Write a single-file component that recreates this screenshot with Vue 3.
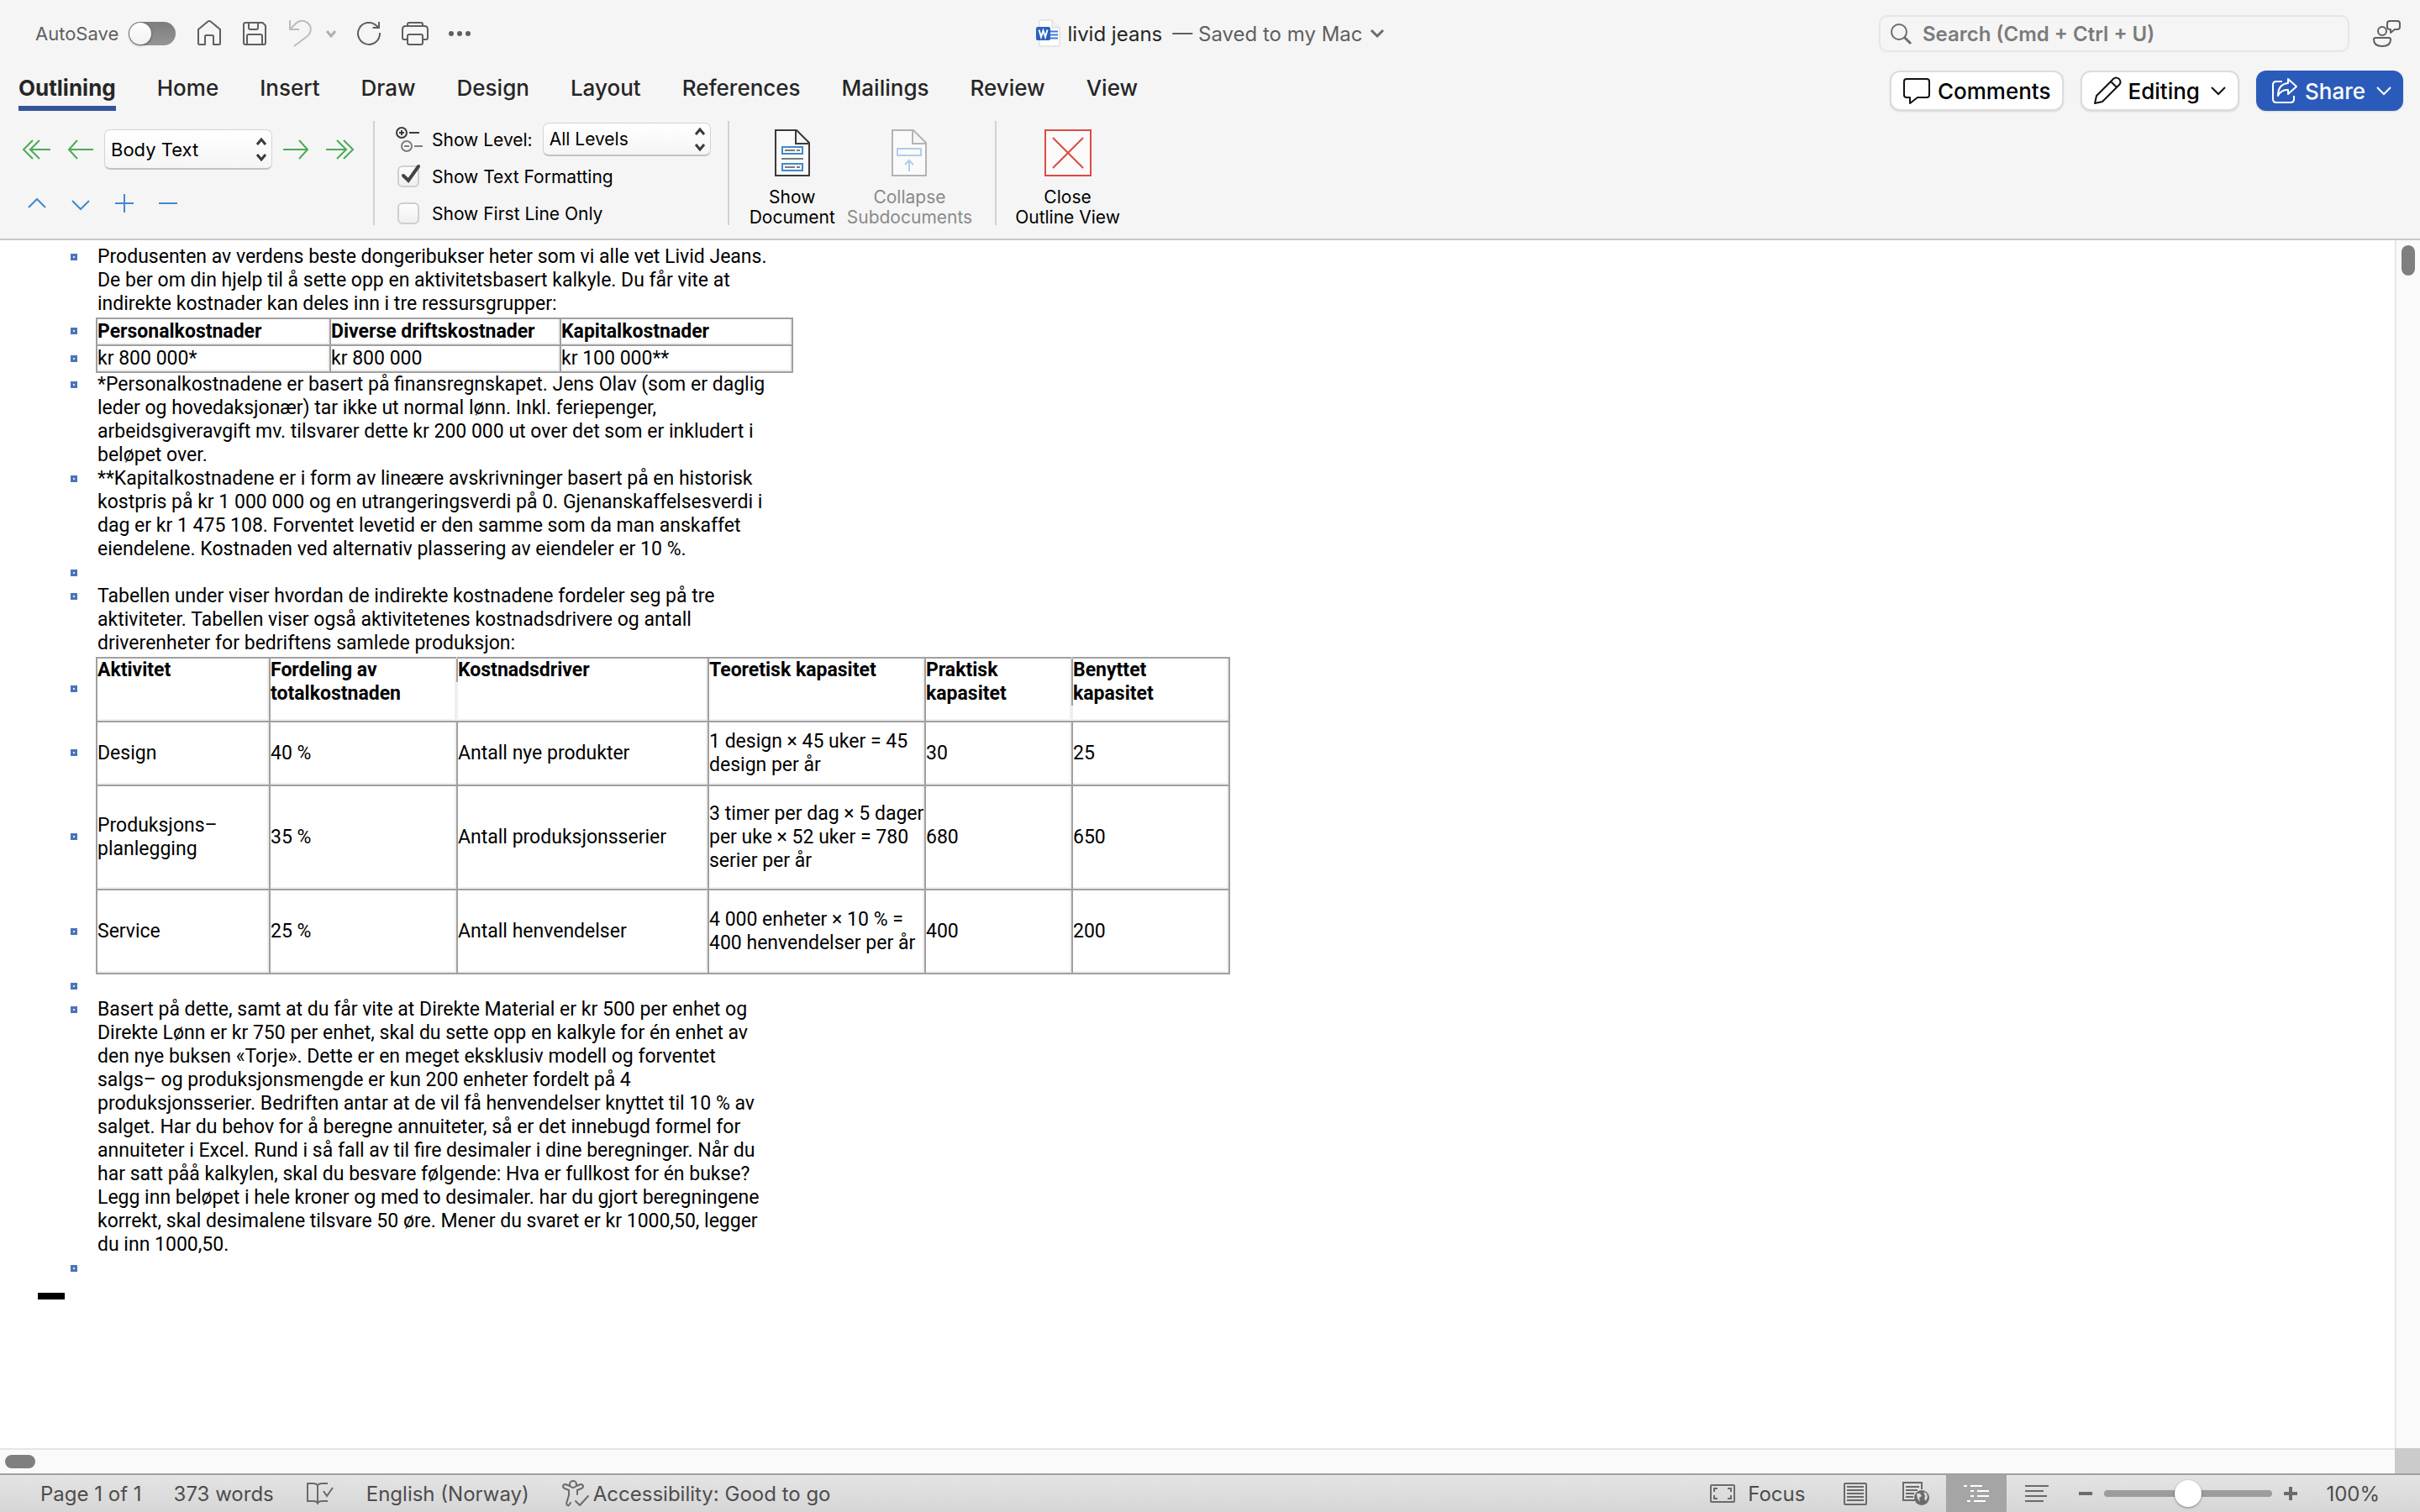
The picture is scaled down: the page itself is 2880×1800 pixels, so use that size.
<template>
    <div class="word">
        <header class="titlebar">
            <div class="quick-access">
                <label class="autosave">
                    AutoSave
                    <input type="checkbox" v-model="autoSave" class="switch" />
                </label>
                <button class="qa-btn" aria-label="Home">
                    <svg width="32" height="32" viewBox="0 0 32 32" fill="none" stroke="#5f5f5f" stroke-width="2" stroke-linejoin="round">
                        <path d="M3 11 L14.500 1.500 Q16 0.500 17.500 1.500 L29 11 V27.500 Q29 29 27.500 29 H21 V19.500 Q21 18 19.500 18 H12.500 Q11 18 11 19.500 V29 H4.500 Q3 29 3 27.500 Z" />
                    </svg>
                </button>
                <button class="qa-btn" aria-label="Save">
                    <svg width="32" height="32" viewBox="0 0 32 32" fill="none" stroke="#5f5f5f" stroke-width="2" stroke-linejoin="round">
                        <path d="M5 3 H25.500 L29 6.500 V27 Q29 29 27 29 H5 Q3 29 3 27 V5 Q3 3 5 3 Z" />
                        <path d="M9 3 V9 Q9 11 11 11 H18 Q20 11 20 9 V3" />
                        <path d="M7 29 V19 Q7 17 9 17 H23 Q25 17 25 19 V29" />
                    </svg>
                </button>
                <button class="qa-btn undo" aria-label="Undo" disabled>
                    <svg width="32" height="32" viewBox="0 0 32 32" fill="none" stroke="#bdbdbd" stroke-width="2">
                        <path d="M4 0 V11 H15" />
                        <path d="M4 11 L11.500 3.500 C16 -0.500 22 0 26 4 C30 8 29.500 14 26 18 L9 31" />
                    </svg>
                    <svg width="14" height="10" viewBox="0 0 14 10" fill="none" stroke="#b0b0b0" stroke-width="3">
                        <path d="M2 2 L7 8 L12 2" />
                    </svg>
                </button>
                <button class="qa-btn" aria-label="Redo">
                    <svg width="32" height="32" viewBox="0 0 32 32" fill="none" stroke="#5f5f5f" stroke-width="2">
                        <path d="M29 15 A13 13 0 1 1 25 6.500 L28 9" />
                        <path d="M28 2 V9 H20.500" />
                    </svg>
                </button>
                <button class="qa-btn" aria-label="Print">
                    <svg width="34" height="32" viewBox="0 0 34 32" fill="none" stroke="#5f5f5f" stroke-width="2" stroke-linejoin="round">
                        <path d="M8 7 V5 Q8 3 10 3 H24 Q26 3 26 5 V7" />
                        <path d="M8 23 H4 Q2 23 2 21 V11 Q2 7 6 7 H28 Q32 7 32 11 V21 Q32 23 30 23 H26" />
                        <rect x="8" y="17" width="18" height="12" rx="2" />
                    </svg>
                </button>
                <button class="qa-btn" aria-label="More">
                    <svg width="28" height="8" viewBox="0 0 28 8" fill="#5f5f5f">
                        <circle cx="4" cy="4" r="3" />
                        <circle cx="14" cy="4" r="3" />
                        <circle cx="24" cy="4" r="3" />
                    </svg>
                </button>
            </div>

            <button class="doc-title">
                <svg width="30" height="34" viewBox="0 0 30 34">
                    <path d="M4 1 H19 L28 10 V32 H4 Z" fill="#fff" stroke="#d4d4d4" />
                    <path d="M19 1 V10 H28" fill="#f2f2f2" stroke="#d4d4d4" />
                    <path d="M17 14.500 H26 M17 18.500 H26 M17 22.500 H26" stroke="#3f7ad6" stroke-width="2" />
                    <rect x="0" y="9" width="17" height="16" rx="2" fill="#2b5fc1" />
                    <path d="M3.500 12.500 L6 21 L8.500 13.500 L11 21 L13.500 12.500" fill="none" stroke="#fff" stroke-width="2" />
                </svg>
                <span class="doc-name">livid jeans</span>
                <span class="doc-state">— Saved to my Mac</span>
                <svg width="18" height="12" viewBox="0 0 18 12" fill="none" stroke="#6c6c6c" stroke-width="3">
                    <path d="M2 2 L9 9 L16 2" />
                </svg>
            </button>

            <div class="title-right">
                <label class="search">
                    <svg width="28" height="28" viewBox="0 0 28 28" fill="none" stroke="#6c6c6c" stroke-width="2">
                        <circle cx="12" cy="12" r="9" />
                        <path d="M18.500 18.500 L26 26" stroke-width="3" />
                    </svg>
                    <input type="search" placeholder="Search (Cmd + Ctrl + U)" aria-label="Search" />
                </label>
                <button class="qa-btn" aria-label="Presence">
                    <svg width="34" height="34" viewBox="0 0 34 34" fill="none" stroke="#5f5f5f" stroke-width="2" stroke-linejoin="round">
                        <circle cx="11" cy="14" r="5" />
                        <path d="M3 22 H19 Q21 22 21 24 Q21 32 11 32 Q1 32 1 24 Q1 22 3 22 Z" />
                        <path d="M20 2 H29 Q32 2 32 5 V9 Q32 12 29 12 H26 L21 16 V12 Q17 12 17 9 V5 Q17 2 20 2 Z" />
                    </svg>
                </button>
            </div>
        </header>

        <nav class="tabbar">
            <div class="tabs">
                <button v-for="tab in tabs" :key="tab" class="tab" :class="{ active: tab === activeTab }"
                    @click="activeTab = tab">{{ tab }}</button>
            </div>
            <div class="actions">
                <button class="action">
                    <svg width="34" height="34" viewBox="0 0 34 34" fill="none" stroke="#111" stroke-width="2" stroke-linejoin="round">
                        <path d="M5 3 H29 Q32 3 32 6 V22 Q32 25 29 25 H18 L9 32 V25 H5 Q2 25 2 22 V6 Q2 3 5 3 Z" />
                    </svg>
                    Comments
                </button>
                <button class="action">
                    <svg width="34" height="34" viewBox="0 0 34 34" fill="none" stroke="#111" stroke-width="2" stroke-linejoin="round">
                        <path d="M2 32 L4 23 L24 3 Q27 0 31 3 Q34 7 31 10 L11 30 Z M21 6 L28 13" />
                    </svg>
                    Editing
                    <svg class="caret" width="20" height="12" viewBox="0 0 20 12" fill="none" stroke="#111" stroke-width="2">
                        <path d="M2 2 L10 10 L18 2" />
                    </svg>
                </button>
                <button class="action primary">
                    <svg width="32" height="32" viewBox="0 0 32 32" fill="none" stroke="#fff" stroke-width="2" stroke-linejoin="round">
                        <path d="M13 5 H6 Q2 5 2 9 V26 Q2 30 6 30 H23 Q27 30 27 26 V22" />
                        <path d="M20 2 L30 11 L20 20 V15 Q12 14 8 22 Q8 8 20 7 Z" />
                    </svg>
                    Share
                    <svg class="caret" width="20" height="12" viewBox="0 0 20 12" fill="none" stroke="#fff" stroke-width="2">
                        <path d="M2 2 L10 10 L18 2" />
                    </svg>
                </button>
            </div>
        </nav>

        <section class="ribbon">
            <div class="group outline-group">
                <div class="tool-row level-row">
                    <button class="tool green" aria-label="Promote to Heading 1">
                        <svg width="36" height="26" viewBox="0 0 36 26"><path d="M34 13 H9 M21 2 L10 13 L21 24 M13 2 L2 13 L13 24" /></svg>
                    </button>
                    <button class="tool green" aria-label="Promote">
                        <svg width="36" height="26" viewBox="0 0 36 26"><path d="M33 13 H4 M14 2 L4 13 L14 24" /></svg>
                    </button>
                    <span class="picker tall">
                        <select aria-label="Outline level">
                            <option>Body Text</option>
                            <option>Level 1</option>
                        </select>
                        <svg width="14" height="28" viewBox="0 0 14 28"><path d="M2 8 L7 2 L12 8 M2 20 L7 26 L12 20" /></svg>
                    </span>
                    <button class="tool green" aria-label="Demote">
                        <svg width="36" height="26" viewBox="0 0 36 26"><path d="M3 13 H32 M22 2 L32 13 L22 24" /></svg>
                    </button>
                    <button class="tool green" aria-label="Demote to Body Text">
                        <svg width="36" height="26" viewBox="0 0 36 26"><path d="M2 13 H27 M15 2 L26 13 L15 24 M23 2 L34 13 L23 24" /></svg>
                    </button>
                </div>
                <div class="tool-row">
                    <button class="tool blue" aria-label="Move Up">
                        <svg width="24" height="24" viewBox="0 0 24 24"><path d="M2 17 L12 7 L22 17" /></svg>
                    </button>
                    <button class="tool blue" aria-label="Move Down">
                        <svg width="24" height="24" viewBox="0 0 24 24"><path d="M2 9 L12 19 L22 9" /></svg>
                    </button>
                    <button class="tool blue" aria-label="Expand">
                        <svg width="24" height="24" viewBox="0 0 24 24"><path d="M1 12 H23 M12 1 V23" /></svg>
                    </button>
                    <button class="tool blue" aria-label="Collapse">
                        <svg width="24" height="24" viewBox="0 0 24 24"><path d="M1 12 H23" /></svg>
                    </button>
                </div>
            </div>

            <div class="group show-group">
                <div class="option-row">
                    <svg width="34" height="34" viewBox="0 0 34 34" fill="none" stroke-width="2">
                        <g stroke="#3a3a3a">
                            <circle cx="8" cy="9" r="6" />
                            <path d="M5 9 H11 M8 6 V12 M17 9 H29" />
                        </g>
                        <g stroke="#7c7c7c">
                            <circle cx="14" cy="25" r="6" />
                            <path d="M11 25 H17 M23 25 H33" />
                        </g>
                    </svg>
                    <label for="show-level">Show Level:</label>
                    <span class="picker">
                        <select id="show-level">
                            <option>All Levels</option>
                            <option>Level 1</option>
                        </select>
                        <svg width="14" height="28" viewBox="0 0 14 28"><path d="M2 8 L7 2 L12 8 M2 20 L7 26 L12 20" /></svg>
                    </span>
                </div>
                <label class="option-row">
                    <span class="check">
                        <input type="checkbox" v-model="showFormatting" />
                        <svg v-if="showFormatting" width="28" height="28" viewBox="0 0 28 28" fill="none" stroke="#444" stroke-width="4" stroke-linecap="round">
                            <path d="M7 14 L13 20 L25 3" />
                        </svg>
                    </span>
                    Show Text Formatting
                </label>
                <label class="option-row">
                    <span class="check">
                        <input type="checkbox" v-model="firstLineOnly" />
                    </span>
                    Show First Line Only
                </label>
            </div>

            <div class="group master-group">
                <button class="big-btn">
                    <svg width="42" height="56" viewBox="0 0 42 56" fill="#fafafa" stroke="#3a3a3a" stroke-width="2">
                        <path d="M1 1 H26 L41 16 V55 H1 Z M25 1 V17 H41" />
                        <path d="M9 21 H33 V29 H9 Z M9 41 H33 V49 H9 Z" stroke="#4189cd" />
                        <path d="M8 35 H34 M12 25 H24 M26 25 H30 M12 45 H24 M26 45 H30" stroke="#7c7c7c" />
                    </svg>
                    <span>Show<br />Document</span>
                </button>
                <button class="big-btn" disabled>
                    <svg width="42" height="56" viewBox="0 0 42 56" fill="#fafafa" stroke="#b4b4b4" stroke-width="2">
                        <path d="M1 1 H26 L41 16 V55 H1 Z M25 1 V17 H41" />
                        <path d="M7 23 H35 V31 H7 Z M21 50 V38 M16 42 L21 37 L26 42" stroke="#b0cde9" />
                    </svg>
                    <span>Collapse<br />Subdocuments</span>
                </button>
            </div>

            <div class="group close-group">
                <button class="big-btn">
                    <svg width="56" height="56" viewBox="0 0 56 56" fill="#fafafa" stroke="#de4a43" stroke-width="2">
                        <path d="M1 1 H55 V55 H1 Z M10 10 L46 46 M46 10 L10 46" />
                    </svg>
                    <span>Close<br />Outline View</span>
                </button>
            </div>
        </section>

        <main class="workspace">
            <article class="page">
                <template v-for="(block, i) in blocks" :key="i">
                    <div v-if="block.lines" class="para">
                        <span class="bullet"></span>
                        <p>
                            <span v-for="line in block.lines" :key="line" class="line">{{ line }}</span>
                        </p>
                    </div>
                    <table v-else :class="block.table">
                        <tbody>
                            <tr v-for="(row, r) in block.rows" :key="r">
                                <td class="gutter"><span class="bullet"></span></td>
                                <component :is="r === 0 ? 'th' : 'td'" v-for="(cell, c) in row" :key="c" class="cell">
                                    <span v-for="line in cell.split('|')" :key="line" class="line">{{ line }}</span>
                                </component>
                            </tr>
                        </tbody>
                    </table>
                </template>
                <div class="end-mark"></div>
            </article>
            <div class="vscroll"><div class="thumb"></div></div>
            <div class="hscroll"><div class="thumb"></div></div>
            <div class="corner"></div>
        </main>

        <footer class="status">
            <div class="status-left">
                <button>Page 1 of 1</button>
                <button>373 words</button>
                <button aria-label="Spelling">
                    <svg width="34" height="30" viewBox="0 0 34 30" fill="none" stroke="#6b6b6b" stroke-width="2">
                        <path d="M14 5 Q12 3 9 3 H2 V24 H9 Q12 24 14 26 Q16 24 19 24 H26 M14 5 V28 M14 5 Q16 3 19 3 H26" />
                        <path d="M21 12 L25 18 L32 8" />
                    </svg>
                </button>
                <button>English (Norway)</button>
                <button class="a11y">
                    <svg width="34" height="34" viewBox="0 0 34 34" fill="none" stroke="#6b6b6b" stroke-width="2" stroke-linejoin="round" stroke-linecap="round">
                        <circle cx="14" cy="6" r="4" />
                        <path d="M10 8 L5 6 Q2 6 2 9 Q2 10 4 11 L9 13 V19 L6 29 Q7 32 9 31 L11 28" />
                        <path d="M18 8 L23 6 Q26 6 26 9 Q26 10 24 11 L19 13 V18" />
                        <path d="M17 26 L22 31 L32 20" />
                    </svg>
                    Accessibility: Good to go
                </button>
            </div>
            <div class="status-right">
                <button class="focus">
                    <svg width="32" height="26" viewBox="0 0 32 26" fill="none" stroke="#6b6b6b" stroke-width="2">
                        <rect x="2" y="3" width="28" height="20" rx="1" />
                        <path d="M6 11 V7 H10 M22 7 H26 V11 M6 15 V19 H10 M22 19 H26 V15" />
                    </svg>
                    Focus
                </button>
                <div class="views">
                    <button class="view" aria-label="Print Layout">
                        <svg width="30" height="28" viewBox="0 0 30 28" fill="none" stroke="#6b6b6b" stroke-width="2">
                            <rect x="2" y="2" width="26" height="25" rx="1" />
                            <path d="M5 6 H25 M5 10 H25 M5 14 H25 M5 18 H25 M5 22 H25" />
                        </svg>
                    </button>
                    <button class="view" aria-label="Web Layout">
                        <svg width="34" height="30" viewBox="0 0 34 30" fill="none" stroke="#6b6b6b" stroke-width="2">
                            <path d="M16 23 H2 V2 H24 V10 M5 7 H21 M5 11 H19 M5 15 H15 M5 19 H14" />
                            <circle cx="24" cy="20" r="9" fill="#6b6b6b" stroke="none" />
                            <path d="M18 15 L22 15 L24 18 L21 20 L22 25 L19 21 Z M26 13 L30 15 L31 19 L29 24 L27 21 L28 18 Z" fill="#dcdcdc" stroke="none" />
                        </svg>
                    </button>
                    <button class="view active" aria-label="Outline">
                        <svg width="32" height="24" viewBox="0 0 32 24" fill="none" stroke="#fff" stroke-width="2">
                            <path d="M1 3 H5 M9 3 H23 M9 9 H13 M17 9 H31 M9 15 H13 M17 15 H31 M5 21 H9 M13 21 H27" />
                        </svg>
                    </button>
                    <button class="view" aria-label="Draft">
                        <svg width="28" height="24" viewBox="0 0 28 24" fill="none" stroke="#6b6b6b" stroke-width="2">
                            <path d="M0 3 H28 M0 9 H22 M0 15 H26 M0 21 H22" />
                        </svg>
                    </button>
                </div>
                <div class="zoom">
                    <button aria-label="Zoom Out">
                        <svg width="16" height="16" viewBox="0 0 16 16" stroke="#6b6b6b" stroke-width="4"><path d="M0 8 H16" /></svg>
                    </button>
                    <input type="range" min="0" max="200" v-model="zoom" aria-label="Zoom" />
                    <button aria-label="Zoom In">
                        <svg width="16" height="16" viewBox="0 0 16 16" stroke="#6b6b6b" stroke-width="4"><path d="M0 8 H16 M8 0 V16" /></svg>
                    </button>
                </div>
                <button class="percent">{{ zoom }}%</button>
            </div>
        </footer>
    </div>
</template>

<script setup>
import { ref } from 'vue'

const tabs = ['Outlining', 'Home', 'Insert', 'Draw', 'Design', 'Layout', 'References', 'Mailings', 'Review', 'View']
const activeTab = ref('Outlining')
const autoSave = ref(false)
const showFormatting = ref(true)
const firstLineOnly = ref(false)
const zoom = ref(100)

// '|' splits a table cell into lines
const blocks = [
    {
        lines: [
            'Produsenten av verdens beste dongeribukser heter som vi alle vet Livid Jeans.',
            'De ber om din hjelp til å sette opp en aktivitetsbasert kalkyle. Du får vite at',
            'indirekte kostnader kan deles inn i tre ressursgrupper:'
        ]
    },
    {
        table: 'resources',
        rows: [
            ['Personalkostnader', 'Diverse driftskostnader', 'Kapitalkostnader'],
            ['kr 800 000*', 'kr 800 000', 'kr 100 000**']
        ]
    },
    {
        lines: [
            '*Personalkostnadene er basert på finansregnskapet. Jens Olav (som er daglig',
            'leder og hovedaksjonær) tar ikke ut normal lønn. Inkl. feriepenger,',
            'arbeidsgiveravgift mv. tilsvarer dette kr 200 000 ut over det som er inkludert i',
            'beløpet over.'
        ]
    },
    {
        lines: [
            '**Kapitalkostnadene er i form av lineære avskrivninger basert på en historisk',
            'kostpris på kr 1 000 000 og en utrangeringsverdi på 0. Gjenanskaffelsesverdi i',
            'dag er kr 1 475 108. Forventet levetid er den samme som da man anskaffet',
            'eiendelene. Kostnaden ved alternativ plassering av eiendeler er 10 %.'
        ]
    },
    { lines: [''] },
    {
        lines: [
            'Tabellen under viser hvordan de indirekte kostnadene fordeler seg på tre',
            'aktiviteter. Tabellen viser også aktivitetenes kostnadsdrivere og antall',
            'driverenheter for bedriftens samlede produksjon:'
        ]
    },
    {
        table: 'activities',
        rows: [
            ['Aktivitet', 'Fordeling av|totalkostnaden', 'Kostnadsdriver', 'Teoretisk kapasitet', 'Praktisk|kapasitet', 'Benyttet|kapasitet'],
            ['Design', '40 %', 'Antall nye produkter', '1 design × 45 uker = 45|design per år', '30', '25'],
            ['Produksjons–|planlegging', '35 %', 'Antall produksjonsserier', '3 timer per dag × 5 dager|per uke × 52 uker = 780|serier per år', '680', '650'],
            ['Service', '25 %', 'Antall henvendelser', '4 000 enheter × 10 % =|400 henvendelser per år', '400', '200']
        ]
    },
    { lines: [''] },
    {
        lines: [
            'Basert på dette, samt at du får vite at Direkte Material er kr 500 per enhet og',
            'Direkte Lønn er kr 750 per enhet, skal du sette opp en kalkyle for én enhet av',
            'den nye buksen «Torje». Dette er en meget eksklusiv modell og forventet',
            'salgs– og produksjonsmengde er kun 200 enheter fordelt på 4',
            'produksjonsserier. Bedriften antar at de vil få henvendelser knyttet til 10 % av',
            'salget. Har du behov for å beregne annuiteter, så er det innebugd formel for',
            'annuiteter i Excel. Rund i så fall av til fire desimaler i dine beregninger. Når du',
            'har satt påå kalkylen, skal du besvare følgende: Hva er fullkost for én bukse?',
            'Legg inn beløpet i hele kroner og med to desimaler. har du gjort beregningene',
            'korrekt, skal desimalene tilsvare 50 øre. Mener du svaret er kr 1000,50, legger',
            'du inn 1000,50.'
        ]
    },
    { lines: [''] }
]
</script>

<style>
body {
    margin: 0;
}
</style>

<style scoped>
.word {
    display: flex;
    flex-direction: column;
    height: 100vh;
    font-family: Inter, "Liberation Sans", sans-serif;
    font-size: 22px;
    color: #000;
    background: #f5f5f5;
}

button,
input,
select {
    font: inherit;
    color: inherit;
}

button {
    display: flex;
    align-items: center;
    justify-content: center;
    padding: 0;
    border: none;
    background: none;
    white-space: nowrap;
}

svg {
    display: block;
    flex-shrink: 0;
}

/* Title bar */
.titlebar {
    display: grid;
    grid-template-columns: 1fr auto 1fr;
    align-items: center;
    height: 80px;
    padding: 0 22px;
    color: #5f5f5f;
}

.quick-access {
    display: flex;
    align-items: center;
    gap: 22px;
    padding-left: 20px;
}

.autosave {
    display: flex;
    align-items: center;
    gap: 12px;
    margin-right: 2px;
}

.switch {
    appearance: none;
    display: flex;
    width: 56px;
    height: 28px;
    margin: 0;
    padding: 1px;
    box-sizing: border-box;
    border-radius: 14px;
    background: linear-gradient(#7c7c7c, #969696);
}

.switch::before {
    content: "";
    width: 26px;
    height: 26px;
    border-radius: 50%;
    background: linear-gradient(#fff, #f1f1f1);
    box-shadow: 0 1px 3px rgba(0, 0, 0, 0.5);
}

.undo {
    gap: 14px;
}

.doc-title {
    font-size: 24px;
    gap: 8px;
}

.doc-name {
    color: #262626;
    padding-right: 4px;
}

.doc-state {
    color: #5f5f5f;
}

.title-right {
    display: flex;
    justify-content: flex-end;
    align-items: center;
    gap: 28px;
}

.search {
    display: flex;
    align-items: center;
    gap: 12px;
    width: 560px;
    height: 44px;
    box-sizing: border-box;
    padding: 0 10px;
    border: 2px solid #e6e6e6;
    border-radius: 10px;
}

.search input {
    flex: 1;
    min-width: 0;
    padding: 0;
    border: none;
    outline: none;
    background: none;
    appearance: none;
    font-size: 24px;
    font-weight: 600;
}

.search input::placeholder {
    color: #7b7b7b;
}

/* Tabs */
.tabbar {
    display: flex;
    justify-content: space-between;
    align-items: flex-start;
    height: 64px;
    padding: 0 20px 0 22px;
}

.tabs {
    display: flex;
    gap: 49px;
}

.tab {
    height: 52px;
    box-sizing: border-box;
    padding-top: 2px;
    font-size: 26px;
    font-weight: 500;
    color: #262626;
    border-bottom: 6px solid transparent;
}

.tab.active {
    font-weight: 700;
    border-image: linear-gradient(#35559a, #35559a) 1;
}

.actions {
    display: flex;
    gap: 20px;
    padding-top: 4px;
}

.action {
    gap: 8px;
    height: 48px;
    padding: 0 13px;
    border: 2px solid #dcdcdc;
    box-sizing: border-box;
    border-radius: 12px;
    background: #fff;
    font-size: 26px;
    font-weight: 500;
    box-shadow: 0 1px 2px rgba(0, 0, 0, 0.12);
}

.action.primary {
    padding: 0 11px 0 16px;
    border-color: #2b5bba;
    background: #2b5bba;
    color: #fff;
}

.caret {
    margin-left: 4px;
}

/* Ribbon */
.ribbon {
    display: flex;
    height: 140px;
    padding-left: 18px;
    border-bottom: 2px solid #c8c8c8;
}

.group {
    display: flex;
    height: 124px;
}

.group + .group {
    border-left: 2px solid #d2d2d2;
}

.outline-group {
    flex-direction: column;
    padding-right: 14px;
}

.tool-row {
    display: flex;
    flex-shrink: 0;
    align-items: center;
    height: 60px;
}

.level-row {
    height: 68px;
}

.tool {
    width: 52px;
    height: 48px;
}

.tool svg {
    fill: none;
    stroke-width: 2;
}

.green svg {
    stroke: #4bab55;
}

.blue svg {
    stroke: #4189cd;
}

.picker {
    position: relative;
    display: flex;
    width: 200px;
    height: 40px;
}

.picker.tall {
    height: 48px;
    margin: 0 2px;
}

.picker select {
    flex: 1;
    appearance: none;
    padding: 0 30px 0 7px;
    border: 1px solid #d4d4d4;
    border-bottom: 2px solid #c2c2c2;
    border-radius: 7px;
    background: linear-gradient(#fff, #f5f5f5);
}

.picker svg {
    position: absolute;
    right: 6px;
    top: calc(50% - 14px);
    fill: none;
    stroke: #3a3a3a;
    stroke-width: 3;
    pointer-events: none;
}

.show-group {
    flex-direction: column;
    padding: 0 20px 0 24px;
}

.option-row {
    display: flex;
    flex-shrink: 0;
    align-items: center;
    gap: 12px;
    height: 44px;
    font-size: 21px;
}

.option-row > svg {
    margin-right: -2px;
}

.check {
    position: relative;
    display: flex;
    padding: 0 3px;
}

.check input {
    appearance: none;
    width: 26px;
    height: 26px;
    margin: 0;
    border: 2px solid #cfcfcf;
    border-radius: 6px;
    background: linear-gradient(#fdfdfd, #f0f0f0);
}

.check svg {
    position: absolute;
    left: 3px;
    top: -2px;
    pointer-events: none;
}

.master-group {
    padding: 0 25px 0 22px;
    gap: 10px;
}

.close-group {
    padding-left: 20px;
}

.big-btn {
    flex-direction: column;
    justify-content: flex-start;
    padding: 10px 2px 0;
    gap: 13px;
    font-size: 21px;
    line-height: 24px;
}

.big-btn:disabled {
    color: #8a8a8a;
}

/* Document */
.workspace {
    flex: 1;
    min-height: 0;
    display: grid;
    grid-template-columns: 1fr 30px;
    grid-template-rows: 1fr 32px;
}

.page {
    overflow: hidden;
    padding-top: 6px;
    background: #fff;
    font-family: Roboto, "Liberation Sans", sans-serif;
    font-size: 23px;
    line-height: 28px;
}

.para {
    display: flex;
}

.para p {
    margin: 0;
    min-height: 28px;
}

.line {
    display: block;
    white-space: nowrap;
}

.bullet {
    display: block;
    width: 2px;
    height: 2px;
    border: 3px solid #4a74b6;
    background: #dbe8fa;
}

.para .bullet {
    margin: 10px 24px 0 84px;
}

table {
    table-layout: fixed;
    border-spacing: 0;
}

.gutter {
    width: 114px;
    padding: 0 0 0 84px;
    box-sizing: border-box;
}

.cell {
    height: 30px;
    padding: 0;
    border-top: 2px solid #a0a0a0;
    border-left: 2px solid #a0a0a0;
    box-shadow: inset -2px -2px 0 #efefef;
    box-sizing: border-box;
    text-align: left;
}

.cell:last-child {
    border-right: 2px solid #a0a0a0;
}

tr:last-child .cell {
    border-bottom: 2px solid #a0a0a0;
}

.resources {
    width: 944px;
    margin-top: 2px;
}

.resources .cell {
    height: 32px;
}

.resources tr:last-child .cell {
    height: 34px;
}

.resources .cell:nth-child(2) {
    width: 278px;
}

.resources .cell:nth-child(3) {
    width: 274px;
}

.activities {
    width: 1464px;
    margin-top: 2px;
}

.activities .cell:nth-child(2) {
    width: 206px;
}

.activities .cell:nth-child(3) {
    width: 223px;
}

.activities .cell:nth-child(4) {
    width: 299px;
}

.activities .cell:nth-child(5) {
    width: 258px;
}

.activities .cell:nth-child(6) {
    width: 175px;
}

.activities .cell {
    height: 76px;
}

.activities tr:nth-child(3) .cell {
    height: 124px;
}

.activities tr:nth-child(4) .cell {
    height: 102px;
}

.activities th {
    vertical-align: top;
}

/* these two side borders stop where the cell text ends */
.activities th:nth-child(4),
.activities th:nth-child(7) {
    border-left-color: transparent;
    background: linear-gradient(#a0a0a0, #a0a0a0) border-box no-repeat 0 0 / 2px 30px,
        linear-gradient(#efefef, #efefef) border-box no-repeat 0 0 / 2px 100%;
}

.activities th:nth-child(7) {
    background-size: 2px 58px, 2px 100%;
}

.end-mark {
    width: 32px;
    height: 8px;
    margin: 15px 0 0 45px;
    background: #000;
}

.vscroll {
    padding: 6px;
    border-left: 2px solid #e6e6e6;
    background: #fafafa;
}

.hscroll {
    padding: 6px;
    border-top: 2px solid #e6e6e6;
    border-bottom: 2px solid #a0a0a0;
    box-sizing: border-box;
    background: #fafafa;
}

.thumb {
    border-radius: 8px;
    background: #7f7f7f;
}

.vscroll .thumb {
    width: 16px;
    height: 36px;
}

.hscroll .thumb {
    width: 36px;
    height: 16px;
}

.corner {
    background: #cbcbcb;
    border-bottom: 2px solid #a0a0a0;
}

/* Status bar */
.status {
    display: flex;
    justify-content: space-between;
    height: 44px;
    padding: 0 48px;
    background: linear-gradient(#e4e4e4, #d6d6d6);
    color: #4d4d4d;
    font-size: 24px;
}

.status-left,
.status-right,
.views,
.zoom {
    display: flex;
}

.status-left {
    gap: 38px;
}

.a11y {
    gap: 4px;
}

.focus {
    gap: 14px;
    margin-right: 24px;
}

.view {
    width: 72px;
}

.view.active {
    background: #a5a5a5;
}

.zoom {
    align-items: center;
    gap: 14px;
    margin: 0 34px 0 14px;
}

.zoom input {
    appearance: none;
    width: 200px;
    height: 8px;
    margin: 0;
    border-radius: 4px;
    background: #9c9c9c;
}

.zoom input::-webkit-slider-thumb {
    appearance: none;
    width: 32px;
    height: 32px;
    border-radius: 50%;
    background: #fff;
    box-shadow: 0 1px 3px rgba(0, 0, 0, 0.4);
}
</style>
